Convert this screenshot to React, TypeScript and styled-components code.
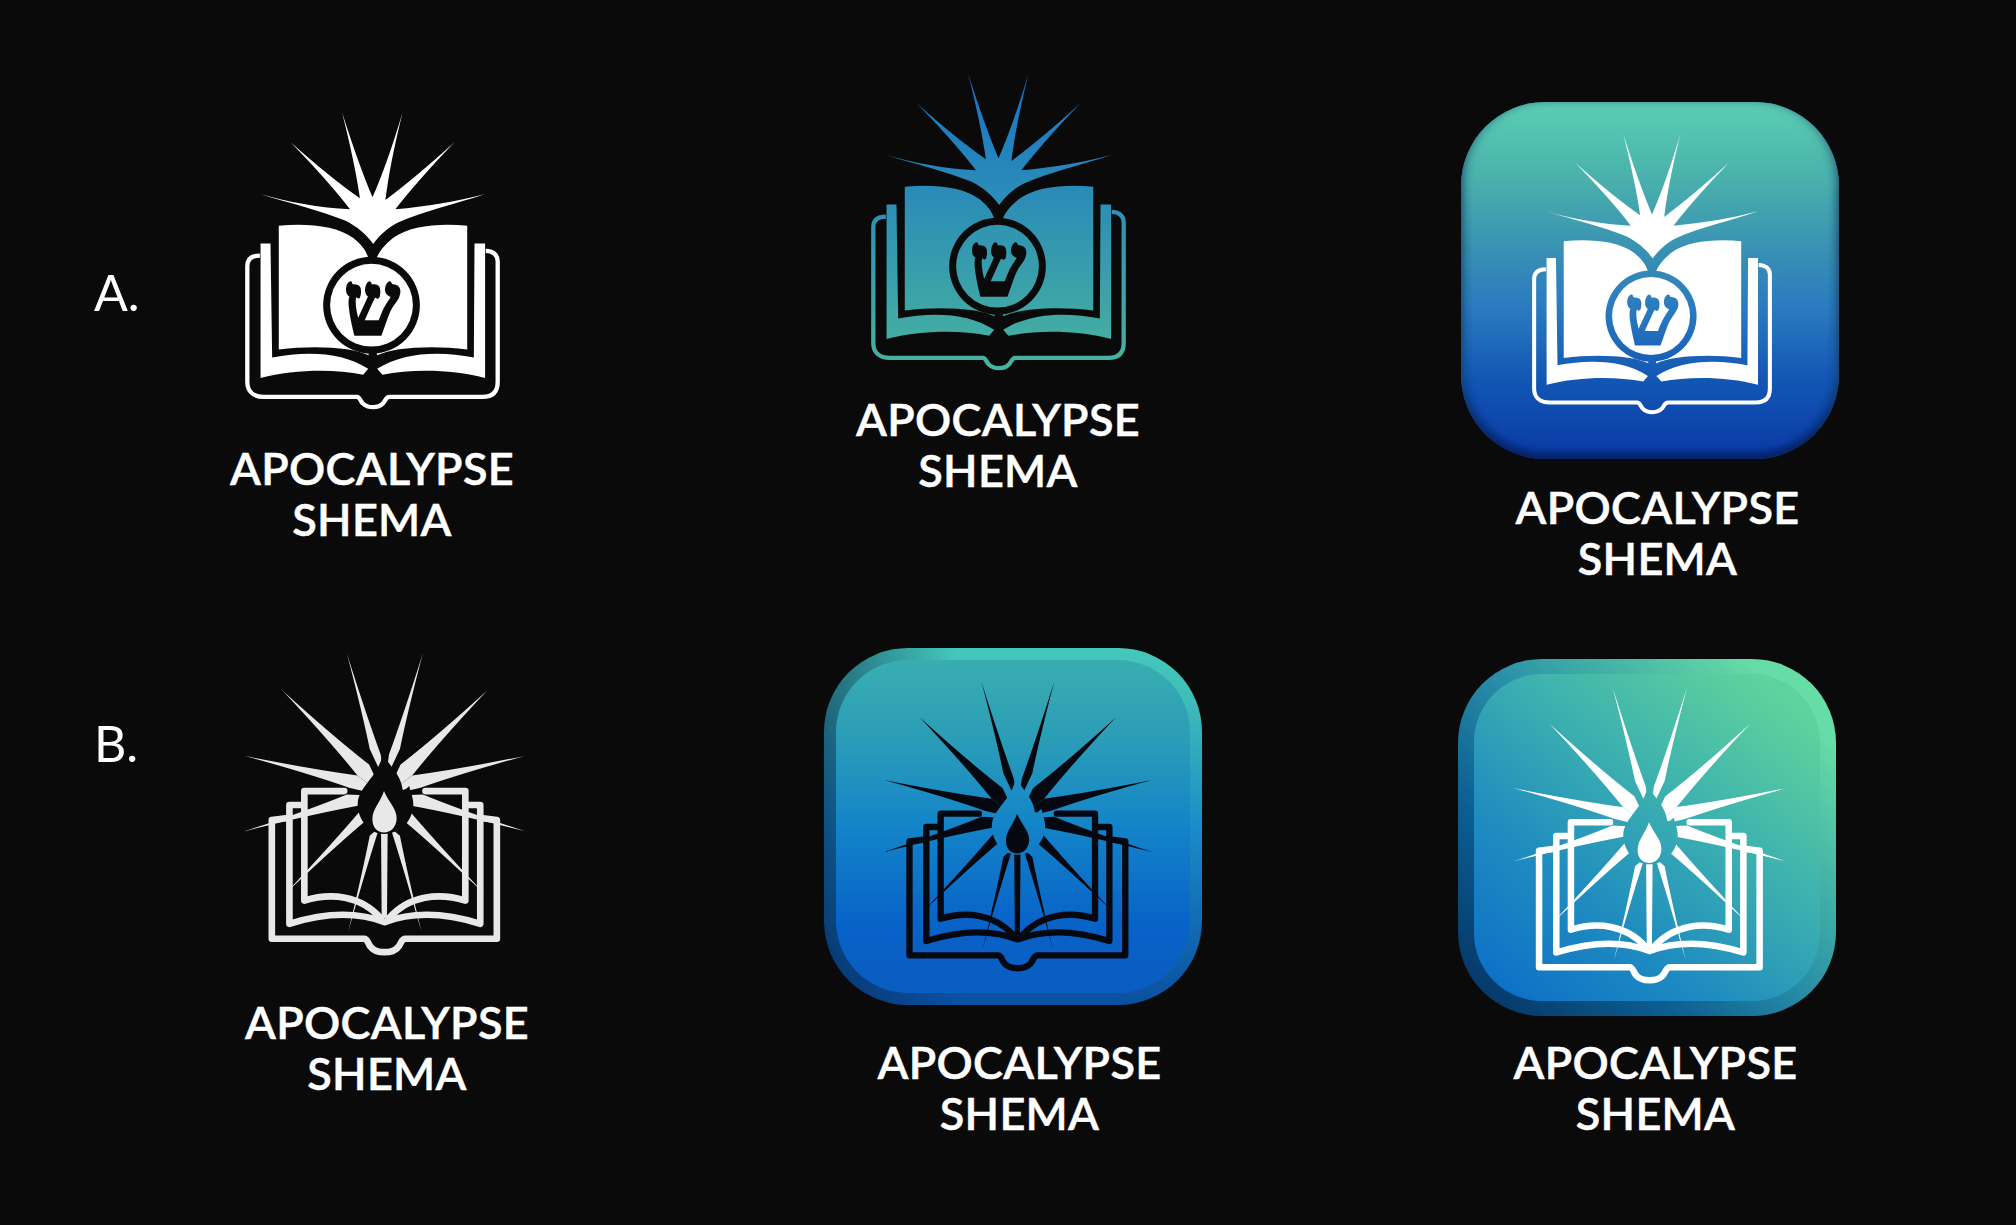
import React from 'react'
import styled, { createGlobalStyle } from 'styled-components'

const GlobalStyle = createGlobalStyle`
  html, body {
    margin: 0;
    padding: 0;
    background: #0a0a0a;
  }
  body {
    font-family: 'Lato', 'Open Sans', sans-serif;
    color: #fff;
  }
`

const Page = styled.div`
  width: 2016px;
  height: 1225px;
  overflow: hidden;
  background: #0a0a0a;
`

const Row = styled.section<{ $height: number }>`
  display: flex;
  align-items: flex-start;
  height: ${(p) => p.$height}px;
`

const RowLabel = styled.div<{ $top: number; $width: number }>`
  width: ${(p) => p.$width}px;
  margin-top: ${(p) => p.$top}px;
  padding-left: 94px;
  box-sizing: border-box;
  font-size: 50px;
  line-height: 60px;
  font-weight: 400;
  flex: none;
`

const Cell = styled.div<{ $top: number; $left: number; $width: number }>`
  display: flex;
  flex-direction: column;
  align-items: center;
  flex: none;
  width: ${(p) => p.$width}px;
  margin-top: ${(p) => p.$top}px;
  margin-left: ${(p) => p.$left}px;
`

const Label = styled.div<{ $gap: number; $shift?: number }>`
  margin-top: ${(p) => p.$gap}px;
  margin-left: ${(p) => p.$shift ?? 0}px;
  font-size: 45px;
  line-height: 51px;
  font-weight: 600;
  letter-spacing: 0.3px;
  -webkit-text-stroke: 0.5px #fff;
  text-align: center;
  white-space: nowrap;
`

// the tile is the bevelled rim, the face sits inside it
const Tile = styled.div<{ $rim: string; $inset: string }>`
  width: 378px;
  height: 357px;
  box-sizing: border-box;
  padding: ${(p) => p.$inset};
  border-radius: 84px;
  display: flex;
  background: ${(p) => p.$rim};
`

const Face = styled.div<{ $background: string; $shadow?: string; $radius: number; $pad: string }>`
  flex: 1;
  box-sizing: border-box;
  padding: ${(p) => p.$pad};
  border-radius: ${(p) => p.$radius}px;
  display: flex;
  align-items: center;
  justify-content: center;
  background: ${(p) => p.$background};
  box-shadow: ${(p) => p.$shadow ?? 'none'};
`

const Mark = styled.svg`
  display: block;
  flex: none;
`

const ShinLetter = styled.text`
  font-family: 'Liberation Serif', 'DejaVu Serif', serif;
  font-weight: 700;
  font-size: 235px;
  stroke: #000;
  stroke-width: 9px;
`

interface MarkProps {
  id: string
  paint: string
  width: number
  height: number
  gradient?: [string, string]
}

const MarkGradient = ({ id, colors }: { id: string; colors: [string, string] }) => (
  <linearGradient id={id} x1="0" y1="0" x2="0" y2="1">
    <stop offset="0.1" stopColor={colors[0]} />
    <stop offset="1" stopColor={colors[1]} />
  </linearGradient>
)

// open book with the burst above it and the shin in the middle
const ShinBook = ({ id, paint, width, height, gradient }: MarkProps) => (
  <Mark width={width} height={height} viewBox="70 62 776 902">
    <defs>
      {gradient && <MarkGradient id={`${id}-g`} colors={gradient} />}
      <mask id={`${id}-m`} maskUnits="userSpaceOnUse" x="0" y="0" width="960" height="1020">
        {/* burst */}
        <path
          fill="#fff"
          d="M118 312 C200 335 300 355 390 358 Q323 271 210 155 Q331 263 420 325 Q405 220 366 65 Q415 220 458 322 Q502 222 549 65 Q510 222 497 330 Q586 264 706 155 Q594 272 527 358 C620 350 710 335 798 312 C710 342 610 365 535 398 C505 412 478 438 460 463 C440 435 412 410 375 392 C300 362 210 340 118 312 Z"
        />
        {/* back pages */}
        <path fill="#fff" d="M120 462 H150 L155 806 C260 785 370 790 445 840 L430 858 C340 840 220 842 120 868 Z" />
        <path fill="#fff" d="M798 462 H766 L764 806 C660 785 550 790 472 840 L488 858 C580 840 700 842 798 868 Z" />
        {/* front pages */}
        <path fill="#fff" d="M175 408 C260 400 350 408 400 445 C425 464 440 482 448 505 L448 800 C400 775 280 768 175 782 Z" />
        <path fill="#fff" d="M744 408 C660 400 570 408 520 445 C495 464 480 482 470 505 L470 800 C520 775 640 768 744 782 Z" />
        {/* cover */}
        <path
          fill="none"
          stroke="#fff"
          strokeWidth="13"
          d="M118 498 C92 498 80 510 80 530 V880 C80 910 100 925 130 925 H410 C420 925 420 935 428 944 C445 960 475 960 490 944 C498 935 498 925 510 925 H790 C820 925 836 910 836 880 V515 C836 495 820 484 800 484"
        />
        {/* seam and ring */}
        <rect x="446" y="780" width="25" height="82" fill="#000" />
        <path fill="#000" d="M445 505 C440 485 425 465 405 448 L460 463 L515 448 C495 465 478 485 470 505 Z" />
        <circle cx="455" cy="648" r="146" fill="#000" />
        <circle cx="455" cy="648" r="125" fill="#fff" />
        <ShinLetter transform="translate(457 736) scale(1 1.12)" textAnchor="middle" fill="#000">ש</ShinLetter>
      </mask>
    </defs>
    <rect
      x="0"
      y="0"
      width="960"
      height="1020"
      fill={gradient ? `url(#${id}-g)` : paint}
      mask={`url(#${id}-m)`}
    />
  </Mark>
)

type Pt = [number, number]

// concave spike from a tip to two base points, closed through the hub
const spike = (t: Pt, a: Pt, b: Pt, hub: Pt = [490, 470]) => {
  const m: Pt = [(a[0] + b[0]) / 2, (a[1] + b[1]) / 2]
  const ctrl = (e: Pt) => `${t[0] + 0.6 * (m[0] - t[0]) + 0.34 * (e[0] - m[0])} ${t[1] + 0.6 * (m[1] - t[1]) + 0.34 * (e[1] - m[1])}`
  return `M${a[0]} ${a[1]} Q${ctrl(a)} ${t[0]} ${t[1]} Q${ctrl(b)} ${b[0]} ${b[1]} L${hub[0]} ${hub[1]} Z`
}

const burstRays = [
  spike([378, 40], [447, 328], [480, 345], [490, 420]),
  spike([184, 152], [410, 408], [445, 375]),
  spike([70, 349], [385, 445], [410, 408]),
  spike([70, 576], [378, 465], [408, 500]),
  spike([192, 765], [420, 513], [426, 552], [490, 500]),
  spike([382, 880], [447, 590], [472, 577], [470, 570]),
]

// three nested page outlines, the burst on top, flame cut out of the burst
const FlameBook = ({ id, paint, width, height }: MarkProps) => (
  <Mark width={width} height={height} viewBox="72 42 842 916">
    <defs>
      <mask id={`${id}-m`} maskUnits="userSpaceOnUse" x="0" y="0" width="990" height="1020">
        <g fill="none" stroke="#fff" strokeWidth="20" strokeLinejoin="round" strokeLinecap="round">
          <path d="M200 536 L152 542 V900 H430 C442 900 440 915 452 927 C468 945 515 945 531 927 C543 915 541 900 555 900 H830 V542 L782 536" />
          <path d="M246 497 H205 V855 C300 825 400 815 492 850 C585 815 685 825 780 855 V497 H738" />
          <path d="M370 455 H250 V785 C330 760 420 770 480 838 M615 455 H735 V785 C655 760 565 770 505 838" />
        </g>
        <g fill="#fff">
          {burstRays.map((d) => (
            <path key={d} d={d} />
          ))}
          <g transform="translate(985 0) scale(-1 1)">
            {burstRays.map((d) => (
              <path key={d} d={d} />
            ))}
          </g>
          <path d="M481 570 H501 L499 838 H483 Z" />
        </g>
        <path
          fill="#000"
          d="M487 340 C500 375 540 400 546 450 C552 455 560 445 566 440 C572 465 580 480 578 500 C575 545 540 584 490 584 C442 584 408 535 411 490 C415 440 475 410 487 340 Z"
        />
        <path
          fill="#fff"
          d="M490 455 C505 490 530 510 528 540 C526 565 510 580 490 580 C470 580 455 565 455 540 C455 510 478 490 490 455 Z"
        />
      </mask>
    </defs>
    <rect x="0" y="0" width="990" height="1020" fill={paint} mask={`url(#${id}-m)`} />
  </Mark>
)

const Name = ({ gap, shift }: { gap: number; shift?: number }) => (
  <Label $gap={gap} $shift={shift}>
    APOCALYPSE
    <br />
    SHEMA
  </Label>
)

const App = () => (
  <Page>
    <GlobalStyle />
    <Row $height={640}>
      <RowLabel $top={262} $width={232}>A.</RowLabel>
      <Cell $top={111} $left={0} $width={280}>
        <ShinBook id="a1" paint="#ffffff" width={257} height={299} />
        <Name gap={33} />
      </Cell>
      <Cell $top={71} $left={346} $width={280}>
        <ShinBook id="a2" paint="#000" width={257} height={301} gradient={['#1874c8', '#4cb89a']} />
        <Name gap={22} />
      </Cell>
      <Cell $top={102} $left={323} $width={378}>
        <Tile $rim="#0a3aa6" $inset="0">
          <Face
            $radius={84}
            $pad="0 0 13px 3px"
            $background="linear-gradient(180deg, #5bcfb3 0%, #49b0ac 22%, #3890b4 42%, #2a7ac0 58%, #1256b4 78%, #0a3aa6 100%)"
            $shadow="inset 0 -5px 10px rgba(4, 18, 70, 0.75), inset 0 3px 8px rgba(120, 235, 205, 0.35), inset 4px 0 8px rgba(4, 30, 70, 0.2), inset -4px 0 8px rgba(4, 30, 70, 0.2)"
          >
            <ShinBook id="a3" paint="#ffffff" width={242} height={282} />
          </Face>
        </Tile>
        <Name gap={23} shift={15} />
      </Cell>
    </Row>
    <Row $height={585}>
      <RowLabel $top={73} $width={232}>B.</RowLabel>
      <Cell $top={14} $left={-2} $width={310}>
        <FlameBook id="b1" paint="#e8e8e8" width={280} height={304} />
        <Name gap={39} shift={4} />
      </Cell>
      <Cell $top={8} $left={283} $width={379}>
        <Tile
          $inset="12px"
          $rim="linear-gradient(90deg, rgba(0, 20, 60, 0.5), rgba(0, 20, 60, 0) 35%), linear-gradient(180deg, #45c8bc 0%, #3fbcb8 15%, #1a8cc8 50%, #0a50a0 100%)"
        >
          <Face
            $radius={72}
            $pad="2px 0 0 10px"
            $background="linear-gradient(180deg, #38aeb0 0%, #2a9cb8 25%, #1384c8 50%, #0862c8 80%, #0a5cc0 100%)"
          >
            <FlameBook id="b2" paint="#050810" width={268} height={292} />
          </Face>
        </Tile>
        <Name gap={32} shift={14} />
      </Cell>
      <Cell $top={19} $left={255} $width={379}>
        <Tile
          $inset="15px 16px"
          $rim="linear-gradient(45deg, #042f60 0%, #0c5f92 30%, #2a90a8 52%, #66dca6 88%)"
        >
          <Face
            $radius={68}
            $pad="0 0 2px 6px"
            $background="linear-gradient(38deg, #0a6cc8 0%, #1f8cc0 32%, #3aaeb0 58%, #5ccf9e 88%, #62d8a0 100%)"
          >
            <FlameBook id="b3" paint="#ffffff" width={274} height={298} />
          </Face>
        </Tile>
        <Name gap={21} shift={18} />
      </Cell>
    </Row>
  </Page>
)

export default App
